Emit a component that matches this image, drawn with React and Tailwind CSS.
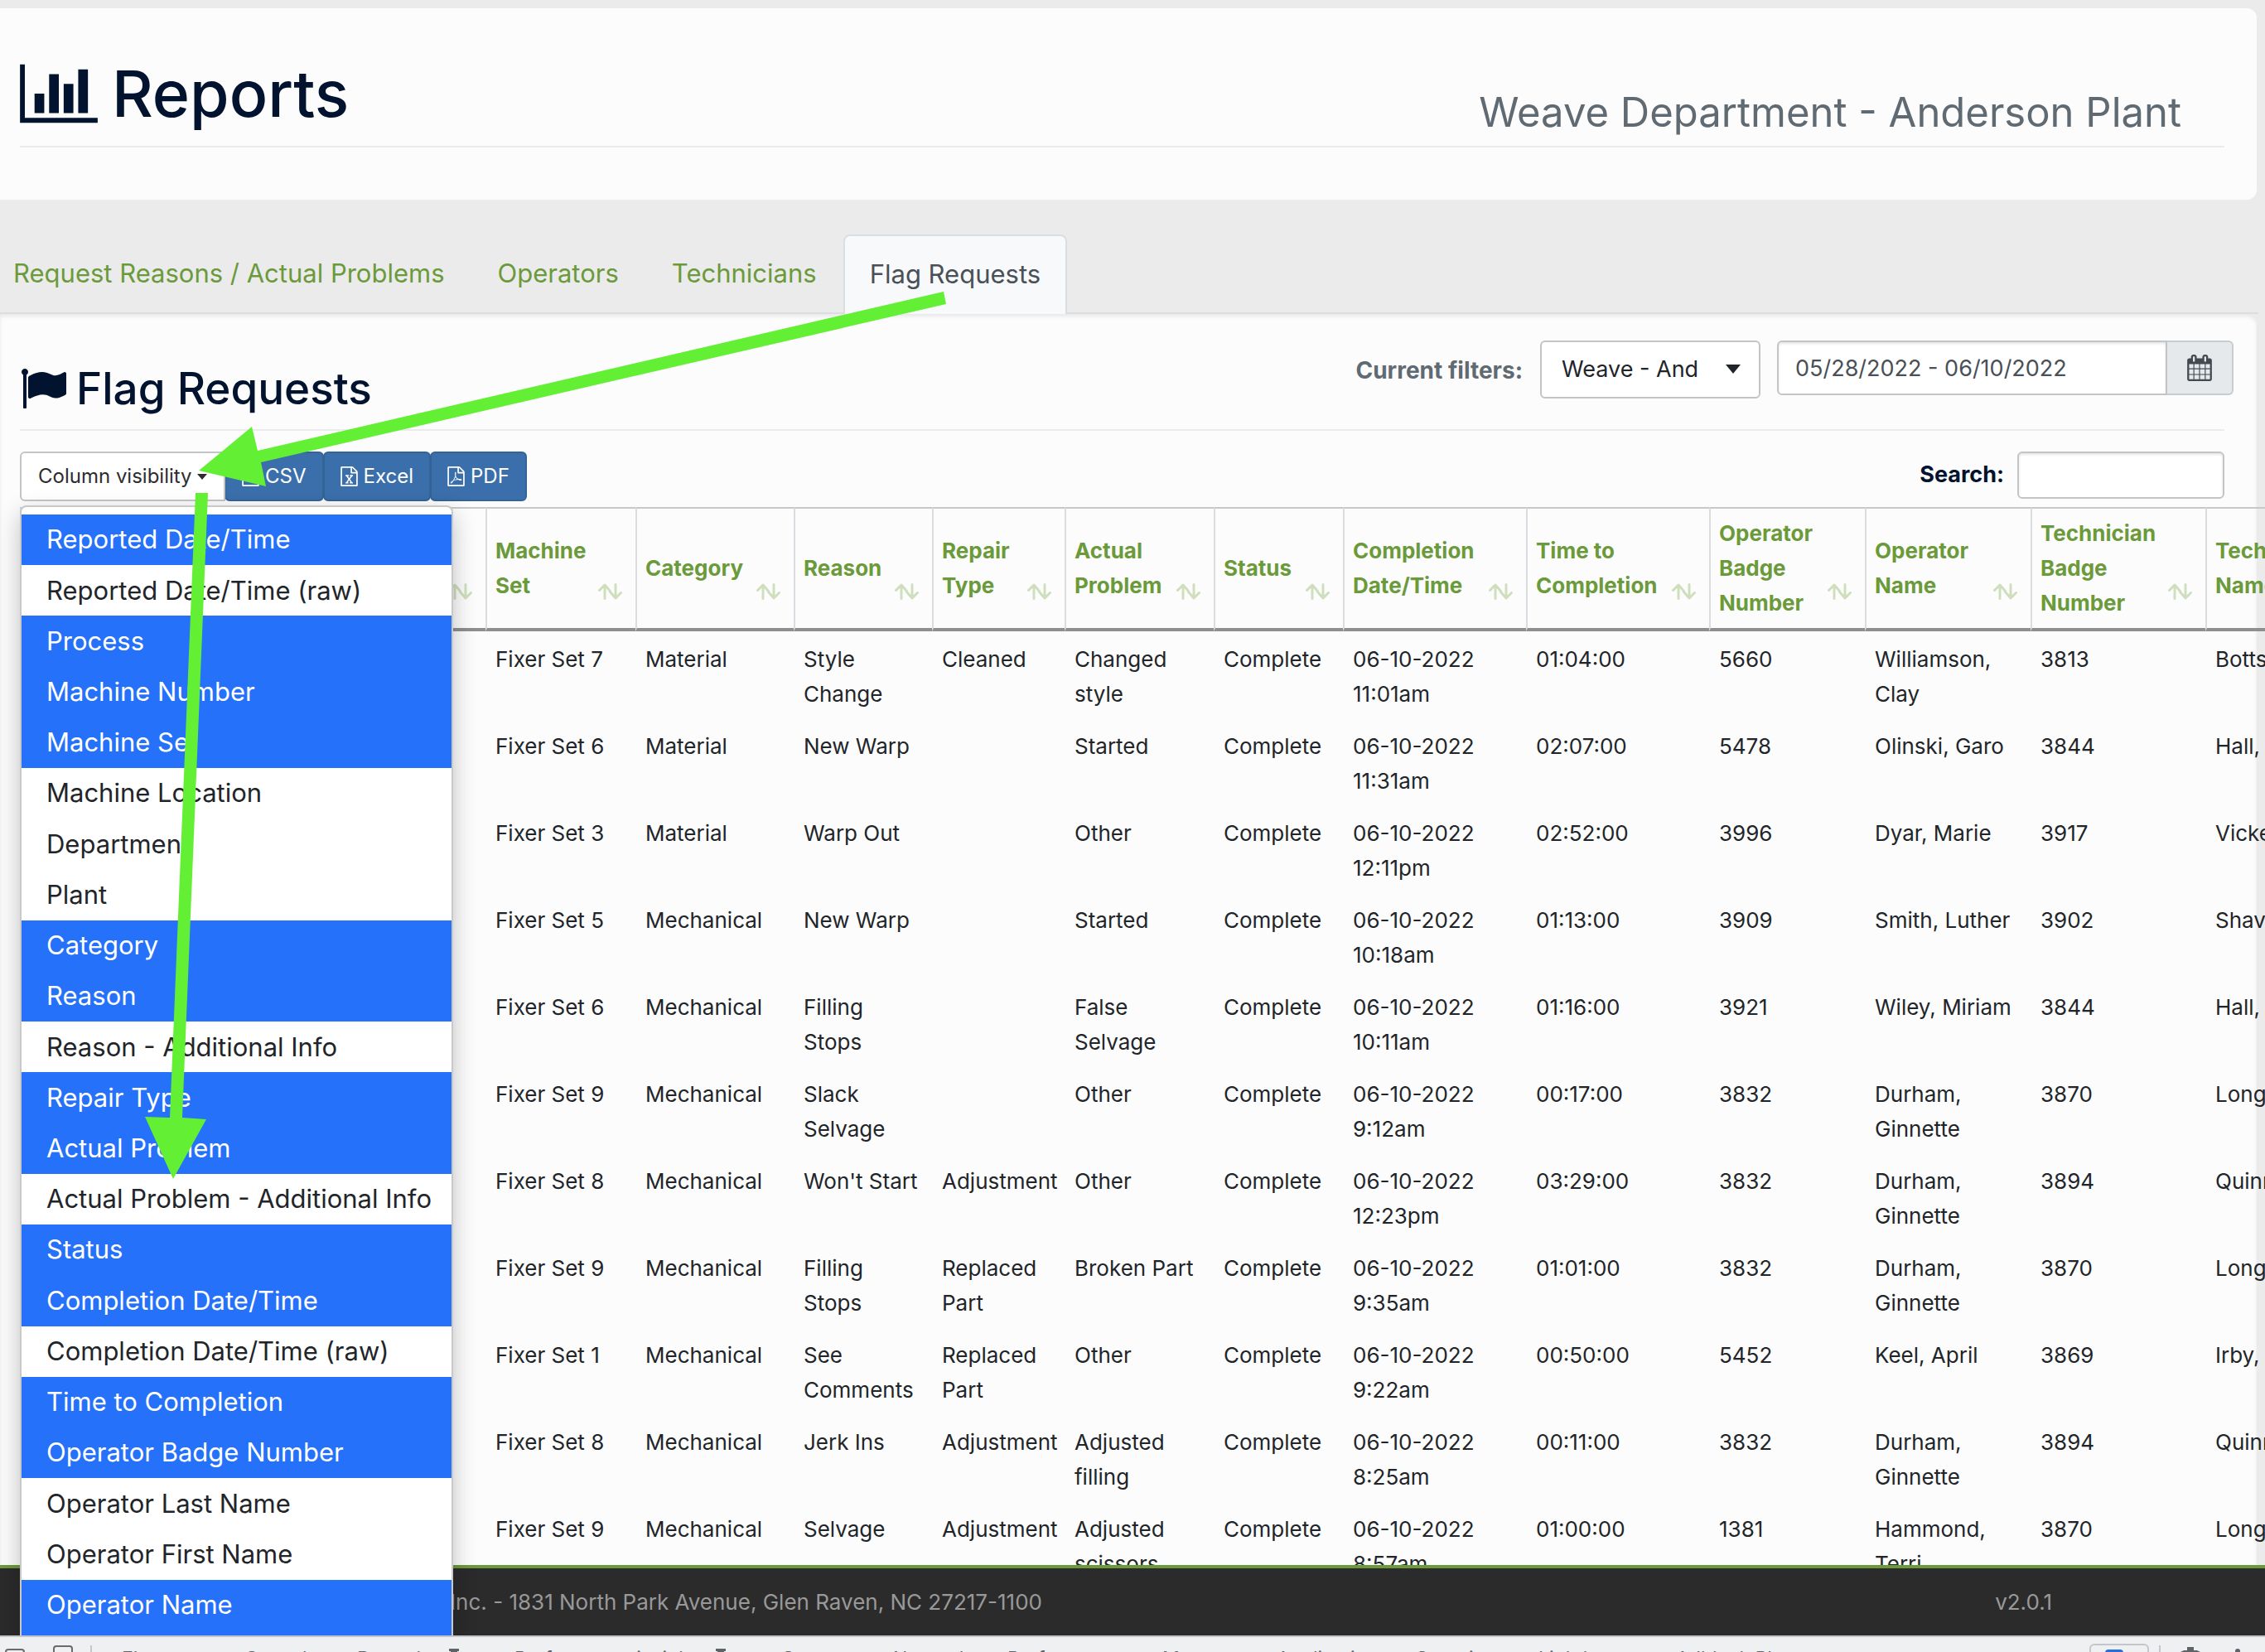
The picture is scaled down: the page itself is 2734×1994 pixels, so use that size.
import React from "react";

const FILE_FRAME =
  "M1468 380q28 28 48 76t20 88v1152q0 40-28 68t-68 28h-1344q-40 0-68-28t-28-68v-1600q0-40 28-68t68-28h896q40 0 88 20t76 48zm-444-244v376h376q-10-29-22-41l-313-313q-12-12-41-22zm384 1528v-1024h-416q-40 0-68-28t-28-68v-416h-768v1536h1280z";
const EXCEL_MARK =
  "m-979-234v106h281v-106h-75l103-161q5-7 10-16.5t7.5-13.5 3.5-4h2q1 4 5 10 2 4 4.500 7.500t6 8 6.500 8.500l107 161h-76v106h291v-106h-68l-192-273 195-282h67v-107h-279v107h74l-103 159q-4 7-10 16.500t-9 13.500l-2 3h-2q-1-4-5-10-6-11-17-23l-106-159h76v-107h-290v107h68l189 272-194 283h-68z";
const PDF_MARK =
  "m-514-593q33 26 84 56 59-7 117-7 147 0 177 49 16 22 2 52 0 1-1 2l-2 2v1q-6 38-71 38-48 0-115-20t-130-53q-221 24-392 83-153 262-242 262-15 0-28-7l-24-12q-1-1-6-5-10-10-6-36 9-40 56-91.5t132-96.5q14-9 23 6 2 2 2 4 52-85 107-197 68-136 104-262-24-82-30.5-159.5t6.5-127.5q11-40 42-40h22q23 0 35 15 18 21 9 68-2 6-4 8 1 3 1 8v30q-2 123-14 192 55 164 146 238zm-576 411q52-24 137-158-51 40-87.5 84t-49.5 74zm398-920q-15 42-2 132 1-7 7-44 0-3 7-43 1-4 4-8-1-1-1-2-1-2-1-3-1-22-13-36 0 1-1 2v2zm-124 661q135-54 284-81-2-1-13-9.5t-16-13.5q-76-67-127-176-27 86-83 197-30 56-45 83zm646-16q-24-24-140-24 76 28 124 28 14 0 18-1 0-1-2-3z";
const TEXT_MARK =
  "m-1024-928q0-14 9-23t23-9h704q14 0 23 9t9 23v64q0 14-9 23t-23 9h-704q-14 0-23-9t-9-23v-64zm0 256q0-14 9-23t23-9h704q14 0 23 9t9 23v64q0 14-9 23t-23 9h-704q-14 0-23-9t-9-23v-64zm0 256q0-14 9-23t23-9h704q14 0 23 9t9 23v64q0 14-9 23t-23 9h-704q-14 0-23-9t-9-23v-64z";

function FileIcon({ mark }) {
  return (
    <svg viewBox="0 0 1536 1792" className="h-6 w-[21px] fill-current" aria-hidden="true">
      <path d={FILE_FRAME + mark} />
    </svg>
  );
}

function BarChartIcon() {
  return (
    <svg viewBox="0 0 2048 1792" className="h-[82px] w-[94px] fill-current" aria-hidden="true">
      <path d="M640 896v512h-256v-512h256zm384-512v1024h-256v-1024h256zm1024 1152v128h-2048v-1536h128v1408h1920zm-640-896v768h-256v-768h256zm384-384v1152h-256v-1152h256z" />
    </svg>
  );
}

function FlagIcon() {
  return (
    <svg viewBox="0 0 1792 1792" className="size-14 fill-current" aria-hidden="true">
      <path d="M320 256q0 72-64 110v1266q0 13-9.5 22.5t-22.5 9.5h-64q-13 0-22.5-9.5t-9.5-22.5v-1266q-64-38-64-110 0-53 37.5-90.5t90.5-37.5 90.5 37.5 37.5 90.5zm1472 64v763q0 25-12.5 38.5t-39.5 27.5q-215 116-369 116-61 0-123.5-22t-108.5-48-115.5-48-142.5-22q-192 0-464 146-17 9-33 9-26 0-45-19t-19-45v-742q0-32 31-55 21-14 79-43 236-120 421-120 107 0 200 29t219 88q38 19 88 19 54 0 117.5-21t110-47 88-47 54.5-21q26 0 45 19t19 45z" />
    </svg>
  );
}

function CalendarIcon() {
  return (
    <svg viewBox="0 0 1664 1792" className="h-8 w-[30px] fill-current" aria-hidden="true">
      <path d="M128 1664h288v-288h-288v288zm352 0h320v-288h-320v288zm-352-352h288v-320h-288v320zm352 0h320v-320h-320v320zm-352-384h288v-288h-288v288zm736 736h320v-288h-320v288zm-384-736h320v-288h-320v288zm768 736h288v-288h-288v288zm-384-352h320v-320h-320v320zm-352-864v-288q0-13-9.5-22.5t-22.5-9.5h-64q-13 0-22.5 9.5t-9.5 22.5v288q0 13 9.5 22.5t22.5 9.5h64q13 0 22.5-9.5t9.5-22.5zm736 864h288v-320h-288v320zm-384-384h320v-288h-320v288zm384 0h288v-288h-288v288zm32-480v-288q0-13-9.5-22.5t-22.5-9.5h-64q-13 0-22.5 9.5t-9.5 22.5v288q0 13 9.5 22.5t22.5 9.5h64q13 0 22.5-9.5t9.5-22.5zm384-64v1280q0 52-38 90t-90 38h-1408q-52 0-90-38t-38-90v-1280q0-52 38-90t90-38h128v-96q0-66 47-113t113-47h64q66 0 113 47t47 113v96h384v-96q0-66 47-113t113-47h64q66 0 113 47t47 113v96h128q52 0 90 38t38 90z" />
    </svg>
  );
}

function SortIcon() {
  return (
    <svg
      viewBox="0 0 30 20"
      className="absolute right-4 bottom-[34px] h-5 w-[30px] fill-none stroke-[#cfdfbd] stroke-3"
      strokeLinecap="round"
      strokeLinejoin="round"
      aria-hidden="true"
    >
      <path d="M9 18.500V2M2.500 8.500L9 2L15.500 9.500" />
      <path d="M22 1.500V18M15.500 10.500L22 18L28.500 11.500" />
    </svg>
  );
}

const TABS = ["Request Reasons / Actual Problems", "Operators", "Technicians", "Flag Requests"];

const MENU = [
  ["Reported Date/Time", true],
  ["Reported Date/Time (raw)", false],
  ["Process", true],
  ["Machine Number", true],
  ["Machine Set", true],
  ["Machine Location", false],
  ["Department", false],
  ["Plant", false],
  ["Category", true],
  ["Reason", true],
  ["Reason - Additional Info", false],
  ["Repair Type", true],
  ["Actual Problem", true],
  ["Actual Problem - Additional Info", false],
  ["Status", true],
  ["Completion Date/Time", true],
  ["Completion Date/Time (raw)", false],
  ["Time to Completion", true],
  ["Operator Badge Number", true],
  ["Operator Last Name", false],
  ["Operator First Name", false],
  ["Operator Name", true],
  ["Technician Badge Number", true],
];

const COLUMNS = [
  ["Reported Date/Time", "w-[206px]"],
  ["Process", "w-[160px]"],
  ["Machine Number", "w-[196px]"],
  ["Machine Set", "w-[181px]"],
  ["Category", "w-[191px]"],
  ["Reason", "w-[167px]"],
  ["Repair Type", "w-[160px]"],
  ["Actual Problem", "w-[180px]"],
  ["Status", "w-[156px]"],
  ["Completion Date/Time", "w-[221px]"],
  ["Time to Completion", "w-[221px]"],
  ["Operator Badge Number", "w-[188px]"],
  ["Operator Name", "w-[200px]"],
  ["Technician Badge Number", "w-[211px]"],
  ["Technician Name", "w-[210px]"],
];

const ROWS = [
  ["Fixer Set 7", "Material", "Style Change", "Cleaned", "Changed style", "Complete", "06-10-2022 11:01am", "01:04:00", "5660", "Williamson, Clay", "3813", "Botts,"],
  ["Fixer Set 6", "Material", "New Warp", "", "Started", "Complete", "06-10-2022 11:31am", "02:07:00", "5478", "Olinski, Garo", "3844", "Hall,"],
  ["Fixer Set 3", "Material", "Warp Out", "", "Other", "Complete", "06-10-2022 12:11pm", "02:52:00", "3996", "Dyar, Marie", "3917", "Vickers,"],
  ["Fixer Set 5", "Mechanical", "New Warp", "", "Started", "Complete", "06-10-2022 10:18am", "01:13:00", "3909", "Smith, Luther", "3902", "Shaver,"],
  ["Fixer Set 6", "Mechanical", "Filling Stops", "", "False Selvage", "Complete", "06-10-2022 10:11am", "01:16:00", "3921", "Wiley, Miriam", "3844", "Hall,"],
  ["Fixer Set 9", "Mechanical", "Slack Selvage", "", "Other", "Complete", "06-10-2022 9:12am", "00:17:00", "3832", "Durham, Ginnette", "3870", "Long,"],
  ["Fixer Set 8", "Mechanical", "Won't Start", "Adjustment", "Other", "Complete", "06-10-2022 12:23pm", "03:29:00", "3832", "Durham, Ginnette", "3894", "Quinn,"],
  ["Fixer Set 9", "Mechanical", "Filling Stops", "Replaced Part", "Broken Part", "Complete", "06-10-2022 9:35am", "01:01:00", "3832", "Durham, Ginnette", "3870", "Long,"],
  ["Fixer Set 1", "Mechanical", "See Comments", "Replaced Part", "Other", "Complete", "06-10-2022 9:22am", "00:50:00", "5452", "Keel, April", "3869", "Irby, T"],
  ["Fixer Set 8", "Mechanical", "Jerk Ins", "Adjustment", "Adjusted filling", "Complete", "06-10-2022 8:25am", "00:11:00", "3832", "Durham, Ginnette", "3894", "Quinn,"],
  ["Fixer Set 9", "Mechanical", "Selvage", "Adjustment", "Adjusted scissors", "Complete", "06-10-2022 8:57am", "01:00:00", "1381", "Hammond, Terri", "3870", "Long,"],
];

function PageHeader() {
  return (
    <header className="mt-[10px] mr-[10px] rounded-r-xl bg-[#fcfcfc] pt-[55px] pr-[39px] pb-[63px] pl-6">
      <div className="flex items-end justify-between border-b-2 border-[#ebebeb] pb-[15px]">
        <h1 className="flex items-center gap-[17px] text-[77px]/[96px] font-medium text-[#02132f]">
          <BarChartIcon />
          Reports
        </h1>
        <p className="pr-[52px] text-[49px]/[50px] text-[#5f6a72]">Weave Department - Anderson Plant</p>
      </div>
    </header>
  );
}

function Tabs() {
  return (
    <nav className="mr-2 flex border-b-2 border-[#dadde2] pt-[42px]">
      {TABS.map((tab, i) =>
        i === 3 ? (
          <a key={tab} href="#" aria-current="page" className="-mb-[2px] rounded-t-lg border-2 border-b-0 border-[#dadde2] bg-[#f8f9fb] px-[30px] text-[31px]/[92px] text-[#495057]">
            {tab}
          </a>
        ) : (
          <a key={tab} href="#" className="px-8 text-[31px]/[94px] text-[#6b9a3b] first:pl-4">
            {tab}
          </a>
        )
      )}
    </nav>
  );
}

function Filters() {
  return (
    <div className="-mr-[11px] flex items-start text-[27px]">
      <label htmlFor="dept" className="pr-[21px] text-[28px]/[72px] font-bold text-[#5f6a72]">
        Current filters:
      </label>
      <div className="relative mr-5">
        <select id="dept" className="h-[70px] w-[266px] appearance-none rounded-md border-2 border-[#c4c4c4] bg-white pl-6 text-[#212529]">
          <option>Weave - And</option>
        </select>
        <svg viewBox="0 0 18 11" className="pointer-events-none absolute top-[29px] right-[24px] h-[11px] w-[18px] fill-[#212529]" aria-hidden="true">
          <path d="M0 0h18l-9 11z" />
        </svg>
      </div>
      <input
        aria-label="Date range"
        defaultValue="05/28/2022 - 06/10/2022"
        className="h-[66px] w-[471px] rounded-l-md border-2 border-[#c4c4c4] bg-white pl-5 text-[#495057] shadow-[inset_0_2px_3px_rgba(0,0,0,0.1)]"
      />
      <button type="button" aria-label="Open calendar" className="flex h-[66px] w-20 items-center justify-center rounded-r-md border-2 border-l-0 border-[#c6cdd3] bg-[#e5e9ec] text-[#43494f]">
        <CalendarIcon />
      </button>
    </div>
  );
}

function ColumnMenu() {
  return (
    <div className="absolute top-full left-0 z-20 mt-[5px] flex h-[1430px] w-[523px] flex-col rounded-lg border-2 border-[#c9c9c9] bg-white py-[9px] shadow-[0_10px_28px_rgba(0,0,0,0.24)]">
      {MENU.map(([label, on]) => (
        <button
          key={label}
          type="button"
          aria-pressed={on}
          className={
            on
              ? "flex flex-1 items-center bg-[#2571f9] pl-[30px] text-left text-[31px] text-white"
              : "flex flex-1 items-center bg-white pl-[30px] text-left text-[31px] text-[#212529]"
          }
        >
          {label}
        </button>
      ))}
    </div>
  );
}

const EXPORT =
  "-ml-px flex h-[60px] items-center gap-[7px] rounded-md border-2 border-[#336397] bg-[#3b6fab] px-[19px] text-[24px] text-white";

function Toolbar() {
  return (
    <div className="flex items-start justify-between pt-[25px] pb-[7px]">
      <div className="flex">
        <div className="relative">
          <button type="button" className="flex h-[60px] w-[248px] items-center gap-1.5 rounded-l-md border-2 border-[#c4c4c4] bg-white pl-5 text-[24px] whitespace-nowrap text-[#2d2d2d]">
            Column visibility
            <svg viewBox="0 0 12 7" className="h-[7px] w-3 shrink-0 fill-current" aria-hidden="true">
              <path d="M0 0h12l-6 7z" />
            </svg>
          </button>
          <ColumnMenu />
        </div>
        <button type="button" className={EXPORT}>
          <FileIcon mark={TEXT_MARK} />
          CSV
        </button>
        <button type="button" className={EXPORT}>
          <FileIcon mark={EXCEL_MARK} />
          Excel
        </button>
        <button type="button" className={EXPORT}>
          <FileIcon mark={PDF_MARK} />
          PDF
        </button>
      </div>
      <div className="flex items-center gap-4">
        <label htmlFor="search" className="text-[27px] font-bold text-[#02132f]">
          Search:
        </label>
        <input id="search" type="search" className="h-[57px] w-[250px] rounded-md border-2 border-[#c4c4c4] bg-white px-3 text-[27px] shadow-[inset_0_2px_3px_rgba(0,0,0,0.1)]" />
      </div>
    </div>
  );
}

function RequestsTable() {
  return (
    <table className="w-[2848px] table-fixed border-separate border-spacing-0 text-left text-[26px]/[42px]">
      <thead>
        <tr>
          {COLUMNS.map(([label, width]) => (
            <th
              key={label}
              scope="col"
              className={
                width +
                " relative border-t-2 border-b-4 border-l-2 border-t-[#c8c8c8] border-b-[#8f8f8f] border-l-[#d9dce1] py-[9px] pr-10 pl-[10px] font-bold text-[#6b9a3b]"
              }
            >
              {label}
              <SortIcon />
            </th>
          ))}
        </tr>
      </thead>
      <tbody className="align-top text-[#212529]">
        {ROWS.map((row, r) => (
          <tr key={r}>
            <td colSpan={3} className="h-[105px]" />
            {row.map((cell, c) => (
              <td key={c} className="pt-[13px] pr-2.5 pb-2 pl-3">
                {cell}
              </td>
            ))}
          </tr>
        ))}
      </tbody>
    </table>
  );
}

function Arrows() {
  return (
    <svg className="pointer-events-none absolute top-0 left-0 z-30 h-full w-full fill-[#63f034]" aria-hidden="true">
      <path d="M1139 352L1142 367L315 558L321 587L240 568L304 515L311 544Z" />
      <path d="M236 595L251 595L220 1349L249 1351L209 1423L175 1348L205 1349Z" />
    </svg>
  );
}

const DEV_TABS = [
  ["Elements", "w-[148px]"],
  ["Console", "w-[136px]"],
  ["Recorder", "w-[190px]", true],
  ["Performance insights", "w-[323px]", true],
  ["Sources", "w-[134px]"],
  ["Network", "w-[138px]"],
  ["Performance", "w-[187px]"],
  ["Memory", "w-[138px]"],
  ["Application", "w-[168px]"],
  ["Security", "w-[148px]"],
  ["Lighthouse", "w-[166px]"],
  ["Adblock Plus", "w-[180px]"],
];

function DevTools() {
  return (
    <div className="flex h-5 shrink-0 items-start overflow-hidden border-t-2 border-[#c3c6cb] bg-[#eff0f2] text-[23px]/[24px] text-[#5f6368]">
      <span className="mt-3.5 ml-1.5 h-6 w-6 shrink-0 rounded-sm border-2 border-[#6a6a6a]" />
      <span className="mt-2.5 ml-[34px] h-7 w-6 shrink-0 rounded-sm border-2 border-[#6a6a6a]" />
      <span className="mt-2.5 ml-[21px] h-7 w-0.5 shrink-0 bg-[#c3c6cb]" />
      <div className="ml-9 flex flex-1 pt-3.5">
        {DEV_TABS.map(([label, width, flask]) => (
          <button key={label} type="button" className={width + " flex shrink-0 items-start gap-3 text-left whitespace-nowrap"}>
            {label}
            {flask && (
              <svg viewBox="0 0 12 16" className="h-4 w-3 fill-[#5f6368]" aria-hidden="true">
                <path d="M0 0h12v3h-2v5l2 8H0l2-8V3H0z" />
              </svg>
            )}
          </button>
        ))}
      </div>
      <div className="mt-2 flex h-10 w-[72px] shrink-0 justify-center rounded-md border-2 border-[#c3c6cb] pt-[5px]">
        <span className="mr-3 h-5 w-[22px] rounded-sm bg-[#2a6be0]" />
      </div>
      <span className="mt-2.5 ml-3 h-7 w-0.5 shrink-0 bg-[#c3c6cb]" />
      <svg viewBox="0 0 24 24" className="mt-3 ml-6 size-6 shrink-0 fill-[#5f6368]" aria-hidden="true">
        <path d="M8 0h8v4h4l4 2v18H0V6l4-2h4z" />
      </svg>
      <span className="mt-3.5 mr-[30px] ml-[42px] h-6 w-1.5 shrink-0 rounded-full bg-[#5f6368]" />
    </div>
  );
}

export default function App() {
  return (
    <div className="relative flex h-screen flex-col overflow-hidden bg-[#ebebeb] font-['Inter',sans-serif]">
      <div className="relative flex min-h-0 flex-1 flex-col overflow-hidden">
        <main className="min-h-0 flex-1">
          <PageHeader />
          <Tabs />
          <section className="mr-[10px] rounded-tr-xl bg-[#fcfcfc] pr-[39px] pl-6 shadow-[inset_0_3px_4px_rgba(0,0,0,0.08)]">
            <div className="flex items-start justify-between border-b-2 border-[#ebebeb] pt-8 pb-[15px]">
              <h2 className="flex items-center gap-3 pt-6 text-[53px]/[68px] font-medium text-[#02132f]">
                <FlagIcon />
                Flag Requests
              </h2>
              <Filters />
            </div>
            <Toolbar />
            <RequestsTable />
          </section>
        </main>
        <footer className="relative z-10 flex shrink-0 items-center justify-between border-t-4 border-[#6b9a3b] bg-[#2b2b2b] pr-[257px] pl-[287px] text-[26px]/[81px] text-[#999999]">
          <span>© 2022 Glen Raven, Inc. - 1831 North Park Avenue, Glen Raven, NC 27217-1100</span>
          <span>v2.0.1</span>
        </footer>
      </div>
      <DevTools />
      <Arrows />
    </div>
  );
}
